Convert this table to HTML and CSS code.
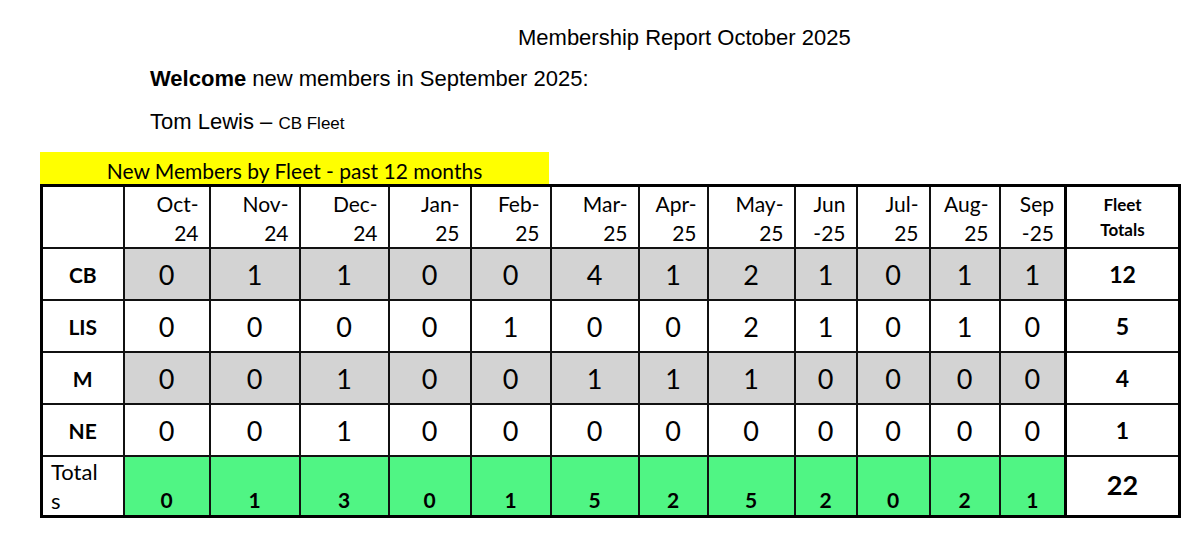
FILE: index.html
```html
<!DOCTYPE html>
<html>
<head>
<meta charset="utf-8">
<link rel="stylesheet" href="styles.css">
</head>
<body>
<div class="page">
  <div class="title">Membership Report October 2025</div>
  <div class="welcome"><b>Welcome</b> new members in September 2025:</div>
  <div class="member">Tom Lewis – <span class="fleet">CB Fleet</span></div>
  <div class="banner">New Members by Fleet - past 12 months</div>
  <table class="grid">
    <colgroup>
      <col style="width:82px"><col style="width:86px"><col style="width:90px"><col style="width:89px">
      <col style="width:82px"><col style="width:80px"><col style="width:88px"><col style="width:69px">
      <col style="width:87px"><col style="width:62px"><col style="width:73px"><col style="width:70px">
      <col style="width:66px"><col style="width:114px">
    </colgroup>
    <tr class="head">
      <td></td>
      <td class="mon">Oct-<br>24</td>
      <td class="mon">Nov-<br>24</td>
      <td class="mon">Dec-<br>24</td>
      <td class="mon">Jan-<br>25</td>
      <td class="mon">Feb-<br>25</td>
      <td class="mon">Mar-<br>25</td>
      <td class="mon">Apr-<br>25</td>
      <td class="mon">May-<br>25</td>
      <td class="mon">Jun<br>-25</td>
      <td class="mon">Jul-<br>25</td>
      <td class="mon">Aug-<br>25</td>
      <td class="mon">Sep<br>-25</td>
      <td class="ft">Fleet<br>Totals</td>
    </tr>
    <tr class="row grey">
      <th>CB</th><td>0</td><td>1</td><td>1</td><td>0</td><td>0</td><td>4</td><td>1</td><td>2</td><td>1</td><td>0</td><td>1</td><td>1</td><td class="sum">12</td>
    </tr>
    <tr class="row">
      <th>LIS</th><td>0</td><td>0</td><td>0</td><td>0</td><td>1</td><td>0</td><td>0</td><td>2</td><td>1</td><td>0</td><td>1</td><td>0</td><td class="sum">5</td>
    </tr>
    <tr class="row grey">
      <th>M</th><td>0</td><td>0</td><td>1</td><td>0</td><td>0</td><td>1</td><td>1</td><td>1</td><td>0</td><td>0</td><td>0</td><td>0</td><td class="sum">4</td>
    </tr>
    <tr class="row">
      <th>NE</th><td>0</td><td>0</td><td>1</td><td>0</td><td>0</td><td>0</td><td>0</td><td>0</td><td>0</td><td>0</td><td>0</td><td>0</td><td class="sum">1</td>
    </tr>
    <tr class="tot">
      <td class="tl">Total<br>s</td><td>0</td><td>1</td><td>3</td><td>0</td><td>1</td><td>5</td><td>2</td><td>5</td><td>2</td><td>0</td><td>2</td><td>1</td><td class="grand">22</td>
    </tr>
  </table>
</div>
</body>
</html>
```
FILE: styles.css
```css
html, body {
  margin: 0;
  padding: 0;
  background: #ffffff;
}
body {
  font-family: "Liberation Sans", Arial, sans-serif;
  color: #000;
}
.page {
  padding: 24px 0 0 40px;
}
.title {
  font-size: 22px;
  line-height: 28px;
  padding-left: 478px;
}
.welcome {
  font-size: 22px;
  line-height: 28px;
  margin-top: 13px;
  padding-left: 110px;
}
.member {
  font-size: 22px;
  line-height: 26px;
  margin-top: 16px;
  padding-left: 110px;
}
.member .fleet {
  font-size: 17px;
}
.banner {
  margin-top: 15px;
  width: 509px;
  height: 32px;
  background: #ffff00;
  font-family: Lato, "Noto Sans", sans-serif;
  font-size: 21px;
  line-height: 38px;
  text-align: center;
  overflow: hidden;
}
.grid {
  border-collapse: collapse;
  table-layout: fixed;
  width: 1138px;
  border: 3px solid #000;
  font-family: Lato, "Noto Sans", sans-serif;
}
.grid td, .grid th {
  border: 2px solid #111;
  padding: 0;
  text-align: center;
  vertical-align: middle;
}
.head td {
  height: 55px;
}
.head .mon {
  text-align: right;
  padding-right: 10px;
  font-size: 21px;
  line-height: 29px;
  padding-top: 2px;
}
.head .ft {
  font-weight: bold;
  font-size: 17px;
  line-height: 25px;
}
.row td, .row th {
  height: 50px;
  font-size: 27px;
}
.row th {
  font-size: 21px;
  font-weight: bold;
  background: #fff;
}
.grey td {
  background: #d3d3d3;
}
.row td.sum {
  background: #fff;
  font-weight: bold;
  font-size: 23px;
}
.tot td {
  height: 53px;
  background: #50f584;
  font-weight: bold;
  font-size: 21px;
  vertical-align: bottom;
  padding-bottom: 3px;
}
.tot td.tl {
  background: #fff;
  font-weight: normal;
  font-size: 22px;
  line-height: 29px;
  text-align: left;
  padding-left: 8px;
  padding-bottom: 0;
}
.tot td.grand {
  background: #fff;
  font-size: 27px;
  vertical-align: middle;
  padding-bottom: 4px;
}
.grid tr td:last-child {
  border-left: 3px solid #000;
}
```
